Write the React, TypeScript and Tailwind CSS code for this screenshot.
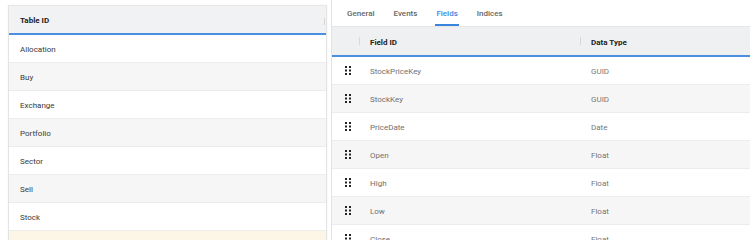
const tables = ["Allocation", "Buy", "Exchange", "Portfolio", "Sector", "Sell", "Stock"];
const fields: [string, string][] = [
  ["StockPriceKey", "GUID"],
  ["StockKey", "GUID"],
  ["PriceDate", "Date"],
  ["Open", "Float"],
  ["High", "Float"],
  ["Low", "Float"],
  ["Close", "Float"],
];
const tabs = ["General", "Events", "Fields", "Indices"];

function Grip() {
  return (
    <svg width="6" height="9" viewBox="0 0 6 9" className="shrink-0">
      {[0, 3.5, 7].map(y => [0, 4].map(x => <rect key={`${x}-${y}`} x={x} y={y} width="2" height="2" fill="#222" />))}
    </svg>
  );
}

export default function App() {
  return (
    <div className="flex w-[750px] h-[240px] overflow-hidden bg-white font-['Roboto',sans-serif] text-[8px]">
      <div className="flex flex-col">
        <div className="h-[1px] w-[327px] bg-[#f1f1f1]" />
        <div className="ml-2 mt-[5px] w-[319px] border-x border-[#e3e3e3] shadow-[0_0_2px_rgba(0,0,0,0.06)]">
          <div className="flex h-[28px] items-center justify-between bg-[#f1f2f3] pl-[11px] pr-[1px] pt-[3px] border-t border-[#e8e8e8]">
            <span className="font-bold text-[#222]">Table ID</span>
            <span className="h-[7px] w-[1px] bg-[#d6d6d6]" />
          </div>
          <div className="h-[2px] bg-[#4a8fe0]" />
          {tables.map((t, i) => (
            <div key={t} className={`flex h-[28px] items-center pl-[11px] pt-[3px] text-[#3a3a3a] border-b border-[#ececec] ${i % 2 ? "bg-[#f6f6f6]" : "bg-white"}`}>
              {t}
            </div>
          ))}
          <div className="h-[28px] bg-[#fdf6e7]" />
        </div>
      </div>
      <div className="ml-[4px] flex-1 border-l border-[#e3e3e3]">
        <div className="flex h-[27px] items-stretch gap-[17px] pl-[14px] border-b border-[#e6e6e6]">
          {tabs.map(t => (
            <div key={t} className={`flex items-center font-medium border-b-2 px-[1px] pt-[3px] ${t === "Fields" ? "text-[#3b86dc] border-[#3b86dc]" : "text-[#666] border-transparent"}`}>
              {t}
            </div>
          ))}
        </div>
        <div className="flex h-[28px] items-center bg-[#eff0f1] text-[#222] font-bold">
          <div className="w-[27px]" />
          <span className="h-[8px] w-[1px] bg-[#d8d8d8]" />
          <div className="w-[220px] pl-[10px] pt-[3px]">Field ID</div>
          <span className="h-[8px] w-[1px] bg-[#d8d8d8]" />
          <div className="pl-[10px] pt-[3px]">Data Type</div>
        </div>
        <div className="h-[2px] bg-[#4a8fe0]" />
        {fields.map(([f, d], i) => (
          <div key={f} className={`flex h-[28px] items-center border-b border-[#ececec] ${i % 2 ? "bg-[#f6f6f6]" : "bg-white"}`}>
            <div className="flex w-[28px] justify-center pl-[3px]"><Grip /></div>
            <div className="w-[220px] pl-[10px] pt-[3px] text-[#707070]">{f}</div>
            <div className="pl-[11px] pt-[3px] text-[#777]">{d}</div>
          </div>
        ))}
      </div>
    </div>
  );
}
